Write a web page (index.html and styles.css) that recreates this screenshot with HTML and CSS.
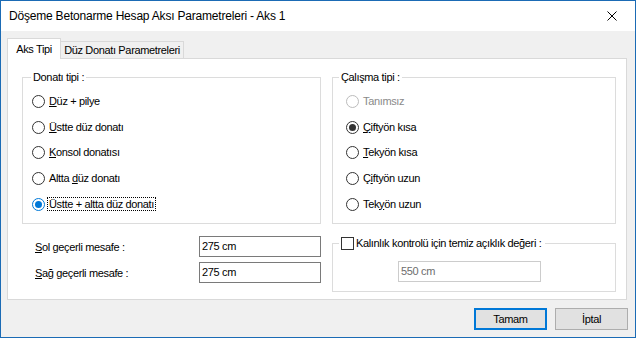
FILE: index.html
```html
<!DOCTYPE html>
<html>
<head>
<meta charset="utf-8">
<link rel="stylesheet" href="styles.css">
</head>
<body>
<div class="window">
  <div class="titlebar">
    <span class="title">Döşeme Betonarme Hesap Aksı Parametreleri - Aks 1</span>
    <span class="close"><svg width="10" height="10" viewBox="0 0 10 10"><path d="M0.5 0.5L9.5 9.5M9.5 0.5L0.5 9.5" stroke="#000" stroke-width="1" fill="none"/></svg></span>
  </div>
  <div class="client">
    <div class="tabs">
      <div class="tab active">Aks Tipi</div>
      <div class="tab second">Düz Donatı Parametreleri</div>
    </div>
    <div class="panel">
      <div class="groups">
        <div class="group g1">
          <div class="legend">Donatı tipi :</div>
          <div class="opt"><span class="radio"></span><span class="lbl"><u>D</u>üz + pilye</span></div>
          <div class="opt"><span class="radio"></span><span class="lbl"><u>Ü</u>stte düz donatı</span></div>
          <div class="opt"><span class="radio"></span><span class="lbl"><u>K</u>onsol donatısı</span></div>
          <div class="opt"><span class="radio"></span><span class="lbl">Altta <u>d</u>üz donatı</span></div>
          <div class="opt"><span class="radio on focus-radio"></span><span class="lbl focus">Üstte + altta düz donatı</span></div>
        </div>
        <div class="group g2">
          <div class="legend">Çalışma tipi :</div>
          <div class="opt disabled"><span class="radio"></span><span class="lbl">Tanımsız</span></div>
          <div class="opt"><span class="radio on"></span><span class="lbl"><u>Ç</u>iftyön kısa</span></div>
          <div class="opt"><span class="radio"></span><span class="lbl"><u>T</u>ekyön kısa</span></div>
          <div class="opt"><span class="radio"></span><span class="lbl">Ç<u>i</u>ftyön uzun</span></div>
          <div class="opt"><span class="radio"></span><span class="lbl">Tek<u>y</u>ön uzun</span></div>
        </div>
      </div>
      <div class="lower">
        <div class="fields">
          <div class="field"><span class="flabel"><u>S</u>ol geçerli mesafe :</span><span class="input">275 cm</span></div>
          <div class="field"><span class="flabel"><u>S</u>ağ geçerli mesafe :</span><span class="input">275 cm</span></div>
        </div>
        <div class="group g3">
          <div class="legend check-legend"><span class="checkbox"></span><span>Kalınlık kontrolü için temiz açıklık değeri :</span></div>
          <span class="input disabled-input">550 cm</span>
        </div>
      </div>
    </div>
    <div class="buttons">
      <div class="btn default">Tamam</div>
      <div class="btn">İptal</div>
    </div>
  </div>
</div>
</body>
</html>
```

FILE: styles.css
```css
* {
  box-sizing: border-box;
}

body {
  margin: 0;
  font-family: "Liberation Sans", Arial, sans-serif;
  font-size: 11px;
  letter-spacing: -0.35px;
  color: #000;
}

.window {
  width: 636px;
  height: 338px;
  border: 1px solid #1b6bb5;
  background: #f0f0f0;
  display: flex;
  flex-direction: column;
}

.titlebar {
  height: 30px;
  background: #fff;
  display: flex;
  align-items: center;
  justify-content: space-between;
  padding-left: 8px;
}

.title {
  font-size: 12px;
  letter-spacing: -0.2px;
  line-height: 16px;
}

.close {
  width: 46px;
  height: 30px;
  display: flex;
  align-items: center;
  justify-content: center;
}

.client {
  flex: 1;
  padding: 7px 8px 0 6px;
}

.tabs {
  display: flex;
  align-items: flex-end;
  height: 20px;
}

.tab {
  height: 17px;
  border: 1px solid #d9d9d9;
  border-bottom: none;
  background: #f0f0f0;
  line-height: 16px;
  text-align: center;
}

.tab.active {
  width: 54px;
  height: 21px;
  line-height: 20px;
  background: #fff;
  margin-bottom: -1px;
  position: relative;
  z-index: 1;
}

.tab.second {
  width: 123px;
  border-left: none;
}

.panel {
  width: 620px;
  height: 242px;
  border: 1px solid #d9d9d9;
  background: #fff;
  padding: 18px 0 0 14px;
}

.groups {
  display: flex;
  gap: 11px;
}

.group {
  position: relative;
  border: 1px solid #dcdcdc;
}

.g1 {
  width: 299px;
  height: 147px;
  padding: 11px 0 0 9px;
}

.g2 {
  width: 284px;
  height: 147px;
  padding: 11px 0 0 13px;
}

.legend {
  position: absolute;
  top: -7px;
  left: 8px;
  background: #fff;
  padding: 0 2px;
  line-height: 13px;
}

.g2 .legend {
  left: 6px;
}

.opt {
  height: 25.6px;
  display: flex;
  align-items: center;
}

.radio {
  flex: none;
  width: 13px;
  height: 13px;
  border: 1px solid #333;
  border-radius: 50%;
  background: #fff;
  margin-right: 4px;
  display: flex;
  align-items: center;
  justify-content: center;
}

.radio.on::after {
  content: "";
  width: 7px;
  height: 7px;
  border-radius: 50%;
  background: #333;
}

.radio.focus-radio {
  border-color: #0078d7;
  margin-right: 2px;
}

.radio.focus-radio::after {
  background: #0078d7;
}

.lbl {
  line-height: 13px;
}

.lbl.focus {
  border: 1px dotted #000;
  padding: 0 1px;
  line-height: 12px;
}

.opt.disabled .radio {
  border-color: #bcbcbc;
}

.opt.disabled .lbl {
  color: #8a8a8a;
}

u {
  text-underline-offset: 1px;
}

.lower {
  display: flex;
  gap: 11px;
}

.fields {
  width: 299px;
  padding: 12px 0 0 13px;
  display: flex;
  flex-direction: column;
  gap: 5px;
}

.field {
  height: 21px;
  display: flex;
  align-items: center;
  justify-content: space-between;
}

.input {
  display: block;
  width: 122px;
  height: 21px;
  border: 1px solid #7a7a7a;
  background: #fff;
  padding-left: 2px;
  line-height: 19px;
}

.g3 {
  width: 284px;
  height: 49px;
  margin-top: 19px;
  padding: 17px 0 0 65px;
}

.check-legend {
  top: -7px;
  left: 6px;
  padding: 0 4px 0 2px;
  display: flex;
  align-items: center;
}

.checkbox {
  flex: none;
  width: 13px;
  height: 13px;
  border: 1px solid #333;
  background: #fff;
  margin-right: 2px;
}

.disabled-input {
  width: 143px;
  border-color: #cccccc;
  color: #6d6d6d;
}

.buttons {
  display: flex;
  justify-content: flex-end;
  gap: 8px;
  margin-top: 8px;
  margin-right: -1px;
}

.btn {
  width: 73px;
  height: 22px;
  border: 1px solid #adadad;
  background: #e1e1e1;
  display: flex;
  align-items: center;
  justify-content: center;
}

.btn.default {
  border: 2px solid #0078d7;
}
```
